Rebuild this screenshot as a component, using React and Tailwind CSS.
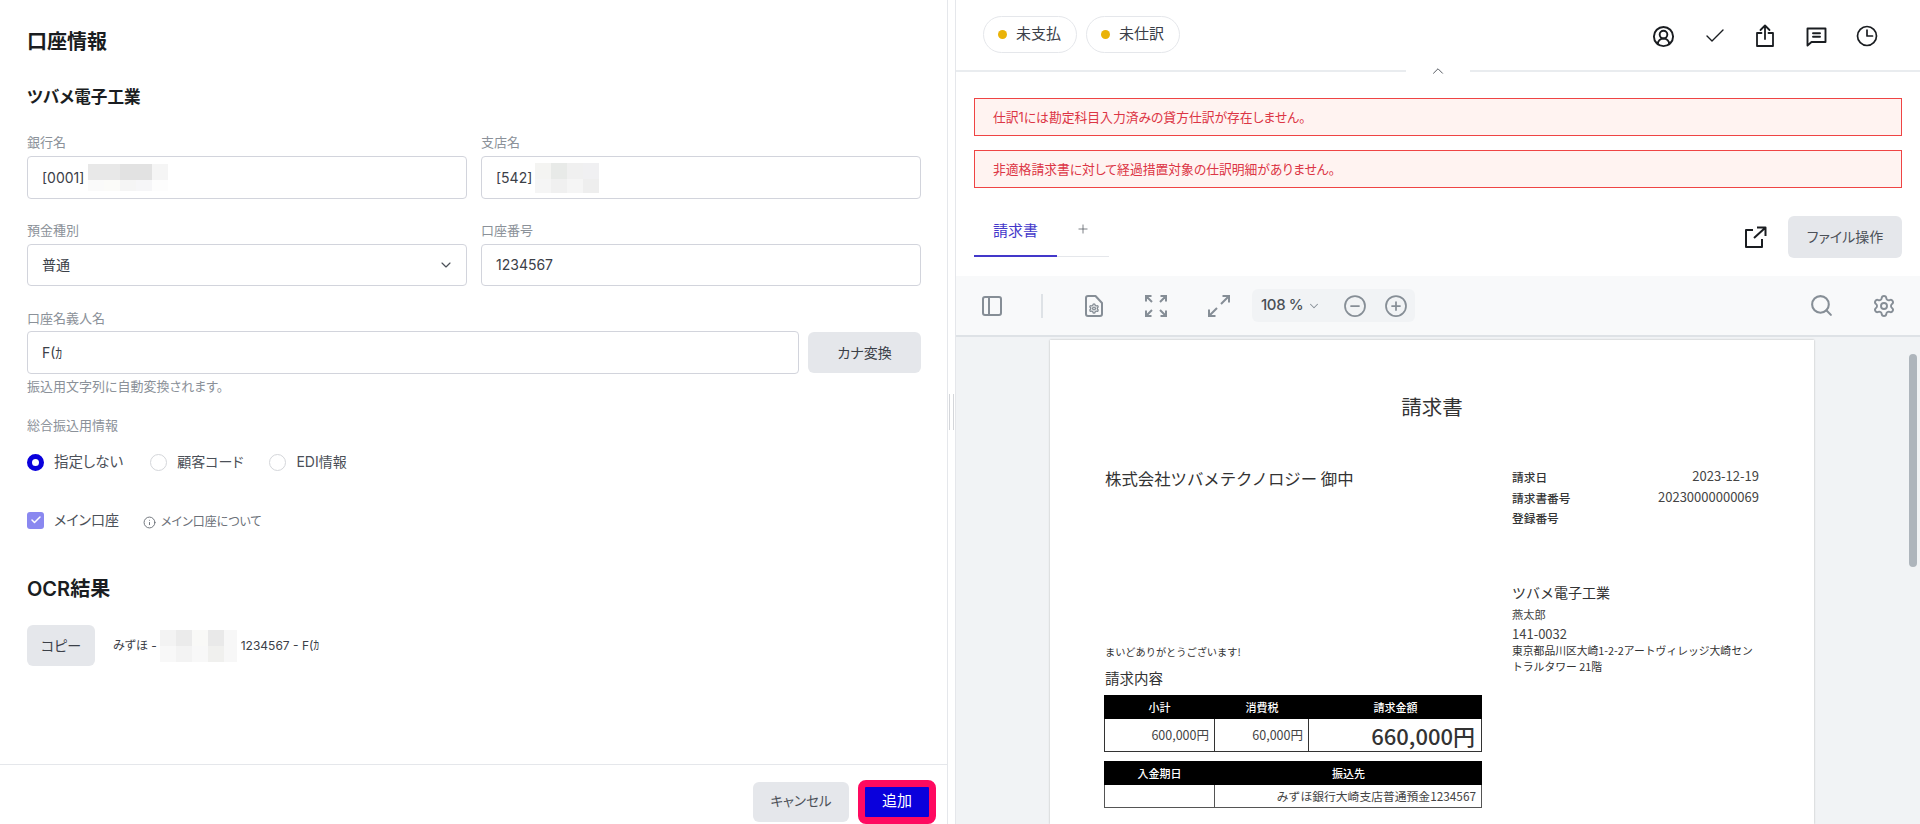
import { Check, ChevronDown, ChevronUp, CircleMinus, CirclePlus, CircleUserRound, Info, PanelLeft, Plus, Search, Settings } from 'lucide-react';

function Mosaic({ cells, className }) {
  return (
    <div className={`grid ${className}`}>
      {cells.map((bg, i) => <div key={i} className={bg} />)}
    </div>
  );
}

function Label({ children, className = '' }) {
  return <div className={`text-[13px] leading-5 text-[#8b9199] ${className}`}>{children}</div>;
}

function Field({ children, className = '' }) {
  return (
    <div className={`flex items-center rounded border border-[#d2d4dc] bg-white pl-[14px] pr-3 text-sm text-[#3b4048] ${className}`}>
      {children}
    </div>
  );
}

function Radio({ checked, label, className = '', textClass = 'text-sm' }) {
  return (
    <div className={`flex items-center gap-[10px] ${className}`}>
      {checked ? (
        <span className="h-[17px] w-[17px] rounded-full border-[5px] border-[#0a00dc] bg-white" />
      ) : (
        <span className="h-[17px] w-[17px] rounded-full border border-[#d4d6da] bg-white" />
      )}
      <span className={`${textClass} leading-5 text-[#4b5058]`}>{label}</span>
    </div>
  );
}

function AccountForm() {
  return (
    <div className="flex h-full w-[948px] shrink-0 flex-col border-r border-[#e5e7eb]">
      <div className="flex-1 pl-[27px] pr-[26px] pt-7">
        <h1 className="text-xl font-semibold leading-7 text-[#1a1d21]">口座情報</h1>
        <h2 className="mt-[29px] text-[16.6px] font-semibold leading-6 text-[#1a1d21]">ツバメ電子工業</h2>

        <div className="mt-[23px] grid grid-cols-2 gap-x-[14px]">
          <div>
            <Label>銀行名</Label>
            <Field className="mt-1 h-[43px]">
              [0001]
              <Mosaic
                className="ml-1 h-[27px] w-20 grid-cols-[repeat(5,16px)] grid-rows-[16px_11px]"
                cells={['bg-[#e8e8e8]', 'bg-[#e8e8e8]', 'bg-[#e2e2e2]', 'bg-[#e2e2e2]', 'bg-[#f5f5f5]', 'bg-[#fafafa]', 'bg-[#fbfbf9]', 'bg-[#f5f5f5]', 'bg-[#f6f6f8]', 'bg-[#fdfdfd]']}
              />
            </Field>
          </div>
          <div>
            <Label>支店名</Label>
            <Field className="mt-1 h-[43px]">
              [542]
              <Mosaic
                className="ml-[3px] mt-[1px] h-[30px] w-16 grid-cols-[repeat(4,16px)] grid-rows-[16px_14px]"
                cells={['bg-[#f4f4f2]', 'bg-[#e8eae8]', 'bg-[#f0f0f0]', 'bg-[#f0f0f2]', 'bg-[#f5f5f5]', 'bg-[#f0f0f0]', 'bg-[#f5f5f5]', 'bg-[#eeeeee]']}
              />
            </Field>
          </div>
          <div className="mt-[21px]">
            <Label>預金種別</Label>
            <Field className="mt-1 h-[42px] justify-between">
              普通
              <ChevronDown size={16} strokeWidth={1.75} className="text-[#4b5058]" />
            </Field>
          </div>
          <div className="mt-[21px]">
            <Label>口座番号</Label>
            <Field className="mt-1 h-[42px]">1234567</Field>
          </div>
        </div>

        <Label className="mt-[22px]">口座名義人名</Label>
        <div className="mt-[3px] flex gap-[9px]">
          <Field className="h-[43px] flex-1">F(ｶ</Field>
          <button type="button" className="mt-[1px] h-[41px] w-[113px] rounded-md bg-[#e5e7eb] text-sm text-[#3b4048]">カナ変換</button>
        </div>
        <Label className="mt-[2px]">振込用文字列に自動変換されます。</Label>

        <Label className="mt-[19px]">総合振込用情報</Label>
        <div className="mt-[17px] flex">
          <Radio checked label="指定しない" textClass="text-[14.5px]" />
          <Radio className="ml-[27px]" label="顧客コード" />
          <Radio className="ml-[26px]" label="EDI情報" />
        </div>

        <div className="mt-9 flex items-center">
          <span className="flex h-[17px] w-[17px] items-center justify-center rounded-[3px] bg-[#8a88f0]">
            <Check size={12} strokeWidth={3} className="text-white" />
          </span>
          <span className="ml-[10px] text-sm leading-5 text-[#4b5058]">メイン口座</span>
          <span className="ml-6 mt-1 flex items-center gap-[5px] text-xs leading-5 text-[#6b7078]">
            <Info size={13} strokeWidth={1.75} />
            メイン口座について
          </span>
        </div>

        <h2 className="mt-[43px] text-xl font-semibold leading-7 text-[#1a1d21]">OCR結果</h2>
        <div className="mt-[22px] flex items-center">
          <button type="button" className="h-[41px] w-[68px] rounded-md bg-[#e5e7eb] text-sm text-[#3b4048]">コピー</button>
          <span className="ml-[18px] text-xs text-[#3b4048]">みずほ -</span>
          <Mosaic
            className="ml-[3px] h-8 w-[77px] grid-cols-[16px_16px_16px_16px_13px] grid-rows-2"
            cells={['bg-[#f3f3f3]', 'bg-[#ebebeb]', 'bg-[#f9f9f7]', 'bg-[#e9e9e9]', 'bg-[#f7f7f7]', 'bg-[#f8f8f8]', 'bg-[#f3f3f3]', 'bg-[#f8f8f8]', 'bg-[#f0f0ee]', 'bg-[#f7f7f7]']}
          />
          <span className="ml-1 text-xs text-[#3b4048]">1234567 - F(ｶ</span>
        </div>
      </div>

      <div className="flex h-[60px] items-center justify-end gap-[9px] border-t border-[#e5e7eb] pr-[11px] pt-[14px]">
        <button type="button" className="h-10 w-24 rounded-md bg-[#e5e7eb] text-[13.5px] text-[#4b5058]">キャンセル</button>
        <button type="button" className="h-11 w-[78px] rounded-lg border-[7px] border-[#ff0a60] bg-[#0a00dc] text-[15px] text-white">追加</button>
      </div>
    </div>
  );
}

function Chip({ label }) {
  return (
    <div className="flex h-[37px] w-[94px] items-center rounded-full border border-[#e5e7eb] pl-[14px] text-[15px] text-[#3b4048]">
      <span className="mr-[9px] h-[9px] w-[9px] rounded-full bg-[#eab308]" />
      {label}
    </div>
  );
}

function Alert({ children }) {
  return (
    <div className="flex h-[38px] items-center border border-[#ef4444] bg-[#fff3f1] pl-[18px] pt-px text-[12.8px] text-[#dc3545]">
      {children}
    </div>
  );
}

function ShareIcon() {
  return (
    <svg width="20" height="24" viewBox="0 0 20 24" fill="none" stroke="#1a1d21" strokeWidth="1.8" strokeLinecap="round" strokeLinejoin="round">
      <path d="M6.5 9H2v13h16V9h-4.5" />
      <path d="M10 15V1.5M5.5 6 10 1.5 14.5 6" />
    </svg>
  );
}

function CommentIcon() {
  return (
    <svg width="21" height="21" viewBox="0 0 21 21" fill="none" stroke="#1a1d21" strokeWidth="1.9" strokeLinejoin="round" strokeLinecap="round">
      <path d="M1.5 2.5h18v13.5H5.5L1.5 19.5z" />
      <path d="M7 7.2h7M7 10.8h7" />
    </svg>
  );
}

function ClockIcon() {
  return (
    <svg width="22" height="22" viewBox="0 0 22 22" fill="none" stroke="#1a1d21" strokeWidth="1.7" strokeLinecap="round" strokeLinejoin="round">
      <circle cx="11" cy="11" r="9.5" />
      <path d="M11 5v6h5.5" />
    </svg>
  );
}

function PopoutIcon() {
  return (
    <svg width="23" height="22" viewBox="0 0 23 22" fill="none" stroke="#1a1d21" strokeWidth="2" strokeLinejoin="round">
      <path d="M9 4H2v17h16v-8" />
      <path d="M10 12 21 2M13 1.5h8.5V10" />
    </svg>
  );
}

function PageGearIcon() {
  return (
    <svg width="20" height="24" viewBox="0 0 20 24" fill="none" stroke="currentColor" strokeWidth="2" strokeLinejoin="round" className="text-[#868e96]">
      <path d="M4 2h7.5L18 9v11a2 2 0 0 1-2 2H4a2 2 0 0 1-2-2V4a2 2 0 0 1 2-2z" />
      <Settings x="4.5" y="9" size={11} strokeWidth={3} />
    </svg>
  );
}

function FitIcon() {
  return (
    <svg width="24" height="24" viewBox="0 0 24 24" fill="none" stroke="#868e96" strokeWidth="2">
      <path d="M2 7.5V2h5.5M2 2l6 6M22 7.5V2h-5.5M22 2l-6 6M2 16.5V22h5.5M2 22l6-6M22 16.5V22h-5.5M22 22l-6-6" />
    </svg>
  );
}

function ExpandIcon() {
  return (
    <svg width="24" height="24" viewBox="0 0 24 24" fill="none" stroke="#868e96" strokeWidth="2">
      <path d="M2 22l8-8M14 10l8-8M15.5 2H22v6.5M2 15.5V22h6.5" />
    </svg>
  );
}

function PdfToolbar() {
  return (
    <div className="flex h-[61px] shrink-0 items-center border-b-2 border-[#dee2e6] bg-[#f8f9fa] pl-6 pr-[24px]">
      <PanelLeft size={24} strokeWidth={2} className="text-[#868e96]" />
      <span className="ml-[37px] h-6 w-0.5 bg-[#dee2e6]" />
      <span className="ml-[41px] flex"><PageGearIcon /></span>
      <span className="ml-10 flex"><FitIcon /></span>
      <span className="ml-[39px] flex"><ExpandIcon /></span>
      <div className="ml-[21px] flex h-[33px] w-[163px] items-center rounded-md bg-[#f1f3f5] pl-[9px] text-[15px] font-medium tracking-tight text-[#495057]">
        108 %
        <ChevronDown size={14} strokeWidth={1.75} className="ml-1 text-[#868e96]" />
        <CircleMinus size={24} strokeWidth={1.75} className="ml-[22px] text-[#868e96]" />
        <CirclePlus size={24} strokeWidth={1.75} className="ml-[17px] text-[#868e96]" />
      </div>
      <Search size={25} strokeWidth={2} className="ml-auto text-[#868e96]" />
      <Settings size={24} strokeWidth={1.9} className="ml-[38px] text-[#868e96]" />
    </div>
  );
}

function InvoicePage() {
  return (
    <div className={'h-full w-[764px] bg-white pl-[54px] pt-[51px] font-["Noto_Sans_CJK_JP",sans-serif] text-[#222] shadow-[0_0_2px_rgba(0,0,0,0.25)] [font-feature-settings:normal]'}>
      <div className="-ml-[54px] text-center text-[20.5px] leading-[30px] text-[#333]">請求書</div>
      <div className="mt-[45px] flex gap-[30px]">
        <div className="w-[378px]">
          <div className="pl-px text-[16.4px] leading-6 text-[#333]">株式会社ツバメテクノロジー 御中</div>
          <div className="mt-[154px] pl-px text-[10.2px] leading-4 text-[#333]">まいどありがとうございます!</div>
          <div className="mt-2 pl-px text-[14.5px] leading-5 text-[#333]">請求内容</div>

          <div className="mt-[7px] grid grid-cols-[111px_94px_173px] grid-rows-[24px_32px] border-b border-[#333] text-[12.5px]">
            <div className="flex items-center justify-center bg-black text-[11px] font-medium text-white">小計</div>
            <div className="flex items-center justify-center bg-black text-[11px] font-medium text-white">消費税</div>
            <div className="flex items-center justify-center bg-black text-[11px] font-medium text-white">請求金額</div>
            <div className="flex items-center justify-end border-x border-[#333] pr-[5px] text-[#444]">600,000円</div>
            <div className="flex items-center justify-end border-r border-[#333] pr-[5px] text-[#444]">60,000円</div>
            <div className="flex items-center justify-end border-r border-[#333] pr-[6px] text-[22px] font-medium text-[#333]">660,000円</div>
          </div>

          <div className="mt-[9px] grid grid-cols-[111px_267px] grid-rows-[24px_22px] border-b border-[#555] text-[11.8px]">
            <div className="flex items-center justify-center bg-black text-[11px] font-medium text-white">入金期日</div>
            <div className="flex items-center justify-center bg-black text-[11px] font-medium text-white">振込先</div>
            <div className="border-x border-[#555]" />
            <div className="flex items-center justify-end border-r border-[#555] pr-[5px] text-[#444]">みずほ銀行大崎支店普通預金1234567</div>
          </div>
        </div>

        <div className="w-[247px] pt-px">
          <div className="flex h-5 items-center justify-between text-[13px] leading-none text-[#444]">
            <span className="text-[11.7px] font-medium text-[#333]">請求日</span>
            <span className="pb-[3px]">2023-12-19</span>
          </div>
          <div className="mt-px flex h-5 items-center justify-between text-[13px] leading-none text-[#444]">
            <span className="text-[11.7px] font-medium text-[#333]">請求書番号</span>
            <span className="pb-[3px]">20230000000069</span>
          </div>
          <div className="flex h-5 items-center text-[11.7px] font-medium leading-none text-[#333]">登録番号</div>
          <div className="mt-[54px] text-sm leading-5 text-[#333]">ツバメ電子工業</div>
          <div className="mt-1 text-[11.2px] leading-4 text-[#444]">燕太郎</div>
          <div className="mt-1 text-[13px] leading-4 text-[#444]">141-0032</div>
          <div className="text-[10.8px] leading-4 text-[#333]">東京都品川区大崎1-2-2アートヴィレッジ大崎セントラルタワー 21階</div>
        </div>
      </div>
    </div>
  );
}

function InvoicePane() {
  return (
    <div className="flex h-full min-w-0 flex-1 flex-col border-l border-[#e5e7eb]">
      <div className="relative flex h-[72px] shrink-0 items-start justify-between border-b-2 border-[#e9ecef] pl-[27px] pt-4">
        <div className="flex gap-[9px]">
          <Chip label="未支払" />
          <Chip label="未仕訳" />
        </div>
        <div className="mr-[42px] mt-2 flex items-center text-[#1a1d21]">
          <CircleUserRound size={23} strokeWidth={2} />
          <Check size={24} strokeWidth={1.4} className="ml-7" />
          <span className="ml-7 flex"><ShareIcon /></span>
          <span className="ml-[31px] flex"><CommentIcon /></span>
          <span className="ml-[29px] flex"><ClockIcon /></span>
        </div>
        <span className="absolute bottom-[-9px] left-[450px] flex h-4 w-16 items-center justify-center bg-white">
          <ChevronUp size={18} strokeWidth={1.25} className="text-[#4b5058]" />
        </span>
      </div>

      <div className="mt-[26px] flex flex-col gap-[14px] pl-[18px] pr-[18px]">
        <Alert>仕訳1には勘定科目入力済みの貸方仕訳が存在しません。</Alert>
        <Alert>非適格請求書に対して経過措置対象の仕訳明細がありません。</Alert>
      </div>

      <div className="mt-7 flex h-[60px] shrink-0 items-start justify-between pl-[18px] pr-[18px]">
        <div className="flex h-[41px] w-[135px] border-b border-[#e5e7eb]">
          <div className="flex h-[41px] w-[83px] justify-center border-b-2 border-[#4338ca] pt-1 text-[15px] text-[#4338ca]">請求書</div>
          <Plus size={14} strokeWidth={1.25} className="ml-[19px] mt-[6px] text-[#4b5058]" />
        </div>
        <div className="flex items-center gap-[21px]">
          <PopoutIcon />
          <button type="button" className="h-[42px] w-[114px] rounded-md bg-[#e5e7eb] text-sm text-[#4b5058]">ファイル操作</button>
        </div>
      </div>

      <PdfToolbar />

      <div className="flex min-h-0 flex-1 overflow-hidden bg-[#f1f3f5]">
        <div className="flex flex-1 justify-center pt-[3px]"><InvoicePage /></div>
        <div className="w-3 pt-[17px]">
          <div className="ml-px h-[213px] w-2 rounded-full bg-[#aeb5bc]" />
        </div>
      </div>
    </div>
  );
}

export default function App() {
  return (
    <div className={'flex h-[824px] w-[1920px] overflow-hidden bg-white font-[Inter,"Noto_Sans_CJK_JP",sans-serif] [font-feature-settings:"palt"]'}>
      <AccountForm />
      <div className="flex w-[7px] shrink-0 items-center justify-center gap-[3px]">
        <span className="h-9 w-px bg-[#d4d6da]" />
        <span className="h-9 w-px bg-[#d4d6da]" />
      </div>
      <InvoicePane />
    </div>
  );
}
